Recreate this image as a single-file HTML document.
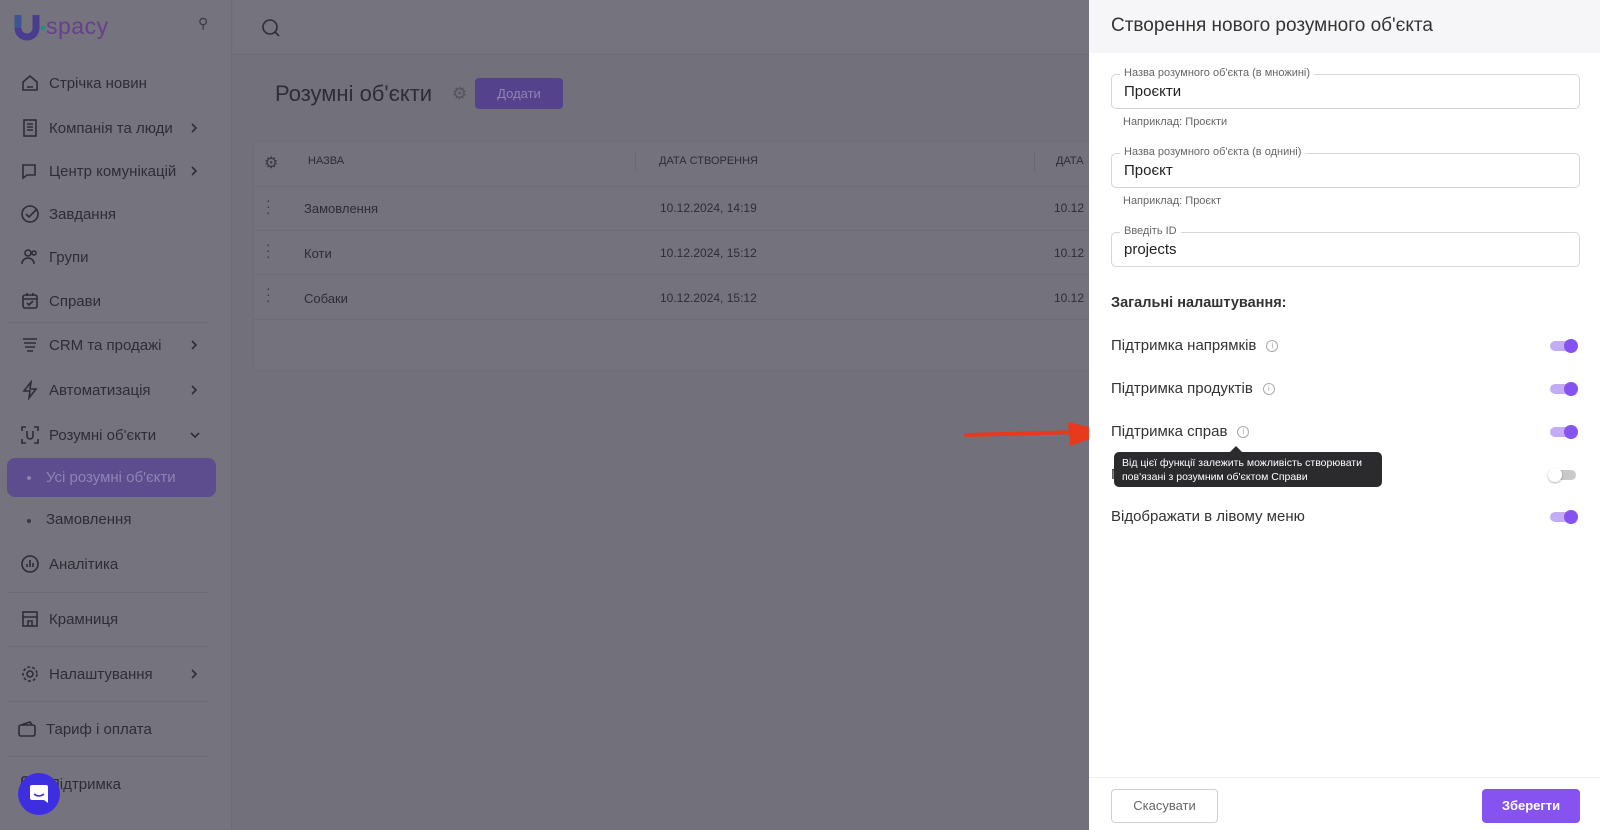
<!DOCTYPE html>
<html><head><meta charset="utf-8">
<style>
*{box-sizing:border-box;margin:0;padding:0}
body{width:1600px;height:830px;overflow:hidden;position:relative;font-family:"Liberation Sans","Noto Sans CJK SC",sans-serif;background:#73717b;color:#2c2c33}
.sb{position:absolute;left:0;top:0;width:232px;height:830px;background:#75737d;border-right:1px solid #6e6c76}
.main{position:absolute;left:233px;top:0;right:0;bottom:0;background:#72707a}
.top{position:absolute;left:233px;top:0;right:0;height:55px;background:#75737d;border-bottom:1px solid #6c6a74}
.it{position:absolute;left:20px;font-size:15px;color:#2e2d36;display:flex;align-items:center;height:24px}
.it svg{width:20px;height:20px;margin-right:9px;stroke:#2e2d36;fill:none;stroke-width:1.6}
.chev{position:absolute;left:189px;width:10px;height:12px}
.sep{position:absolute;left:8px;width:200px;height:1px;background:#6d6b75}
.panel{position:absolute;left:1089px;top:0;width:511px;height:830px;background:#fff}
.ph{height:53px;background:#f6f6f8;padding:15px 0 0 22px;font-size:19px;color:#333}
.fld{position:absolute;left:22px;width:469px;height:35px;border:1px solid #d6d6da;border-radius:5px;padding:8px 12px 0;font-size:15px;color:#222}
.fld .lb{position:absolute;left:8px;top:-8px;background:#fff;padding:0 4px;font-size:11px;color:#666}
.hl{position:absolute;left:34px;font-size:11px;color:#666}
.row{position:absolute;left:22px;font-size:15px;color:#333;display:flex;align-items:center}
.inf{display:inline-block;width:12px;height:12px;border:1px solid #aaa;border-radius:50%;margin-left:10px;font-size:8px;color:#aaa;text-align:center;line-height:10px}
.tg{position:absolute;left:461px;width:26px;height:10px;border-radius:5px;background:#c4acf5}
.tg i{position:absolute;right:-2px;top:-2px;width:14px;height:14px;border-radius:50%;background:#8653f0}
.tg.off{background:#c9c9c9}
.tg.off i{left:-2px;right:auto;background:#fff;box-shadow:0 1px 2px rgba(0,0,0,.3)}
</style></head><body>
<div class="main"></div>
<div class="top"><svg style="position:absolute;left:28px;top:18px" width="20" height="20" viewBox="0 0 20 20" fill="none" stroke="#2e2d36" stroke-width="1.6"><circle cx="9" cy="9" r="7"/><path d="M14 14l4 4"/></svg></div>
<svg width="0" height="0" style="position:absolute"><defs><symbol id="cv" viewBox="0 0 10 12"><path d="M3 2l4 4-4 4" fill="none" stroke="#2e2d36" stroke-width="1.6"/></symbol></defs></svg>
<div class="sb">
 <svg style="position:absolute;left:13px;top:12px" width="36" height="32" viewBox="0 0 36 32"><path d="M5 3v13a9 9 0 0 0 18 0V3" fill="none" stroke="#4a3c8e" stroke-width="7"/><path d="M5 3v13" stroke="#3d5590" stroke-width="7"/><circle cx="30" cy="16" r="2.5" fill="#2a8a8a"/></svg>
 <div style="position:absolute;left:46px;top:13px;font-size:23px;color:#66408c;letter-spacing:0.5px">spacy</div>
 <div style="position:absolute;left:198px;top:15px;font-size:14px;color:#3a3942">⚲</div>
 <div class="it" style="top:71px"><svg viewBox="0 0 20 20"><path d="M3 9l7-6 7 6v8H3z M7 14h6"/></svg>Стрічка новин</div>
 <div class="it" style="top:116px"><svg viewBox="0 0 20 20"><rect x="4" y="2" width="12" height="16"/><path d="M7 6h6M7 9h6M7 12h6"/></svg>Компанія та люди</div><svg class="chev" style="top:122px"><use href="#cv"/></svg>
 <div class="it" style="top:159px"><svg viewBox="0 0 20 20"><path d="M3 4h12v10H7l-4 3z"/></svg>Центр комунікацій</div><svg class="chev" style="top:165px"><use href="#cv"/></svg>
 <div class="it" style="top:202px"><svg viewBox="0 0 20 20"><circle cx="10" cy="10" r="8"/><path d="M6 10l3 3 7-7"/></svg>Завдання</div>
 <div class="it" style="top:245px"><svg viewBox="0 0 20 20"><circle cx="8" cy="6" r="3"/><path d="M2 17c0-4 3-6 6-6s6 2 6 6"/><circle cx="14" cy="6" r="2"/></svg>Групи</div>
 <div class="it" style="top:289px"><svg viewBox="0 0 20 20"><rect x="3" y="4" width="14" height="13" rx="2"/><path d="M3 8h14M7 2v3M13 2v3M7 12l2 2 4-4"/></svg>Справи</div>
 <div class="sep" style="top:322px"></div>
 <div class="it" style="top:333px"><svg viewBox="0 0 20 20"><path d="M3 4h14M4 8h12M5 12h10M7 16h6"/></svg>CRM та продажі</div><svg class="chev" style="top:339px"><use href="#cv"/></svg>
 <div class="it" style="top:378px"><svg viewBox="0 0 20 20"><path d="M11 2L4 11h6l-1 7 7-9h-6z"/></svg>Автоматизація</div><svg class="chev" style="top:384px"><use href="#cv"/></svg>
 <div class="it" style="top:423px"><svg viewBox="0 0 20 20"><path d="M2 6V2h4M14 2h4v4M18 14v4h-4M6 18H2v-4M7 6v5a3 3 0 0 0 6 0V6"/></svg>Розумні об'єкти</div><svg class="chev" style="top:429px;left:190px;transform:rotate(90deg)"><use href="#cv"/></svg>
 <div style="position:absolute;left:7px;top:458px;width:209px;height:39px;border-radius:8px;background:#5d4d8e"></div>
 <div style="position:absolute;left:27px;top:476px;width:4px;height:4px;border-radius:50%;background:#8d82b0"></div>
 <div style="position:absolute;left:46px;top:469px;font-size:15px;color:#8e84b4">Усі розумні об'єкти</div>
 <div style="position:absolute;left:27px;top:519px;width:4px;height:4px;border-radius:50%;background:#3a3942"></div>
 <div style="position:absolute;left:46px;top:511px;font-size:15px;color:#2e2d36">Замовлення</div>
 <div class="it" style="top:552px"><svg viewBox="0 0 20 20"><circle cx="10" cy="10" r="8"/><path d="M7 13v-3M10 13V6M13 13v-4"/></svg>Аналітика</div>
 <div class="sep" style="top:592px"></div>
 <div class="it" style="top:607px"><svg viewBox="0 0 20 20"><rect x="3" y="3" width="14" height="14"/><path d="M3 8h14M8 17v-5h4v5"/></svg>Крамниця</div>
 <div class="sep" style="top:646px"></div>
 <div class="it" style="top:662px"><svg viewBox="0 0 20 20"><circle cx="10" cy="10" r="3"/><circle cx="10" cy="10" r="7" stroke-dasharray="3 2"/></svg>Налаштування</div><svg class="chev" style="top:668px"><use href="#cv"/></svg>
 <div class="sep" style="top:701px"></div>
 <div class="it" style="top:717px;left:17px"><svg viewBox="0 0 20 20"><rect x="2" y="6" width="16" height="11" rx="2"/><path d="M4 6l9-3 2 3"/></svg>Тариф і оплата</div>
 <div class="sep" style="top:756px"></div>
 <div class="it" style="top:772px"><svg viewBox="0 0 20 20"><rect x="2" y="3" width="16" height="14" rx="2"/></svg>Підтримка</div>
 <div style="position:absolute;left:18px;top:773px;width:42px;height:42px;border-radius:50%;background:#3d2fe0"><svg style="position:absolute;left:11px;top:11px" width="20" height="20" viewBox="0 0 20 20"><path d="M3 1h14a2 2 0 0 1 2 2v16l-4-3H3a2 2 0 0 1-2-2V3a2 2 0 0 1 2-2z" fill="#fff"/><path d="M5 10q5 4 10 0" stroke="#3d2fe0" stroke-width="1.5" fill="none"/></svg></div>
</div>
<div style="position:absolute;left:275px;top:81px;font-size:22px;color:#2e2d36">Розумні об'єкти</div>
<div style="position:absolute;left:452px;top:84px;font-size:17px;color:#55545e">⚙</div>
<div style="position:absolute;left:475px;top:78px;width:88px;height:31px;border-radius:4px;background:#55428c;color:#8e84b4;font-size:13px;text-align:center;line-height:31px">Додати</div>
<div style="position:absolute;left:254px;top:142px;width:840px;height:228px;background:#74727c;border-radius:6px;box-shadow:0 0 3px rgba(0,0,0,.08)">
 <div style="position:absolute;left:10px;top:11px;font-size:16px;color:#3a3942">⚙</div>
 <div style="position:absolute;left:54px;top:13px;font-size:11px;color:#2e2d36">НАЗВА</div>
 <div style="position:absolute;left:381px;top:10px;width:1px;height:20px;background:#6a6872"></div>
 <div style="position:absolute;left:405px;top:13px;font-size:11px;color:#2e2d36">ДАТА СТВОРЕННЯ</div>
 <div style="position:absolute;left:780px;top:10px;width:1px;height:20px;background:#6a6872"></div>
 <div style="position:absolute;left:802px;top:13px;font-size:11px;color:#2e2d36">ДАТА</div>
 <div style="position:absolute;left:0;right:0;top:44px;height:1px;background:#6d6b75"></div>
 <div style="position:absolute;left:0;right:0;top:88px;height:1px;background:#6d6b75"></div>
 <div style="position:absolute;left:0;right:0;top:132px;height:1px;background:#6d6b75"></div>
 <div style="position:absolute;left:0;right:0;top:177px;height:1px;background:#6d6b75"></div>
 <div style="position:absolute;left:12px;top:55px;font-size:14px;color:#3a3942;line-height:6px">·<br>·<br>·</div>
 <div style="position:absolute;left:12px;top:99px;font-size:14px;color:#3a3942;line-height:6px">·<br>·<br>·</div>
 <div style="position:absolute;left:12px;top:143px;font-size:14px;color:#3a3942;line-height:6px">·<br>·<br>·</div>
 <div style="position:absolute;left:50px;top:59px;font-size:13px;color:#2e2d36">Замовлення</div>
 <div style="position:absolute;left:50px;top:104px;font-size:13px;color:#2e2d36">Коти</div>
 <div style="position:absolute;left:50px;top:149px;font-size:13px;color:#2e2d36">Собаки</div>
 <div style="position:absolute;left:406px;top:59px;font-size:12px;color:#2e2d36">10.12.2024, 14:19</div>
 <div style="position:absolute;left:406px;top:104px;font-size:12px;color:#2e2d36">10.12.2024, 15:12</div>
 <div style="position:absolute;left:406px;top:149px;font-size:12px;color:#2e2d36">10.12.2024, 15:12</div>
 <div style="position:absolute;left:800px;top:59px;font-size:12px;color:#2e2d36">10.12</div>
 <div style="position:absolute;left:800px;top:104px;font-size:12px;color:#2e2d36">10.12</div>
 <div style="position:absolute;left:800px;top:149px;font-size:12px;color:#2e2d36">10.12</div>
</div>
<svg style="position:absolute;left:960px;top:420px" width="152" height="28" viewBox="0 0 152 28"><path d="M6 15L120 12" stroke="#e8391c" stroke-width="4" stroke-linecap="round"/><path d="M108 2L150 12L110 26z" fill="#e8391c"/></svg>
<div class="panel">
 <div class="ph">Створення нового розумного об'єкта</div>
 <div class="fld" style="top:74px"><span class="lb">Назва розумного об'єкта (в множині)</span>Проєкти</div>
 <div class="hl" style="top:116px">Наприклад: Проєкти</div>
 <div class="fld" style="top:153px"><span class="lb">Назва розумного об'єкта (в однині)</span>Проєкт</div>
 <div class="hl" style="top:195px">Наприклад: Проєкт</div>
 <div class="fld" style="top:232px"><span class="lb">Введіть ID</span>projects</div>
 <div style="position:absolute;left:22px;top:295px;font-size:14.5px;font-weight:bold;color:#333">Загальні налаштування:</div>
 <div class="row" style="top:337px">Підтримка напрямків<span class="inf">i</span></div><div class="tg" style="top:341px"><i></i></div>
 <div class="row" style="top:380px">Підтримка продуктів<span class="inf">i</span></div><div class="tg" style="top:384px"><i></i></div>
 <div class="row" style="top:423px">Підтримка справ<span class="inf">i</span></div><div class="tg" style="top:427px"><i></i></div>
 <div class="row" style="top:466px">П</div><div class="tg off" style="top:470px"><i></i></div>
 <div class="row" style="top:508px">Відображати в лівому меню</div><div class="tg" style="top:512px"><i></i></div>
 <div style="position:absolute;left:25px;top:452px;width:268px;height:35px;background:#2b2b2e;border-radius:5px;color:#fff;font-size:10.5px;line-height:14px;padding:4px 8px">Від цієї функції залежить можливість створювати<br>пов'язані з розумним об'єктом Справи</div>
 <div style="position:absolute;left:141px;top:446px;width:0;height:0;border-left:6px solid transparent;border-right:6px solid transparent;border-bottom:6px solid #2b2b2e"></div>
 <div style="position:absolute;left:0;right:0;top:777px;height:1px;background:#f0f0f2"></div>
 <div style="position:absolute;left:22px;top:789px;width:107px;height:34px;border:1px solid #d0d0d4;border-radius:4px;text-align:center;line-height:32px;font-size:13px;color:#666">Скасувати</div>
 <div style="position:absolute;left:393px;top:789px;width:98px;height:34px;background:#8653f0;border-radius:4px;text-align:center;line-height:34px;font-size:13px;font-weight:bold;color:#fff">Зберегти</div>
</div>
</body></html>
